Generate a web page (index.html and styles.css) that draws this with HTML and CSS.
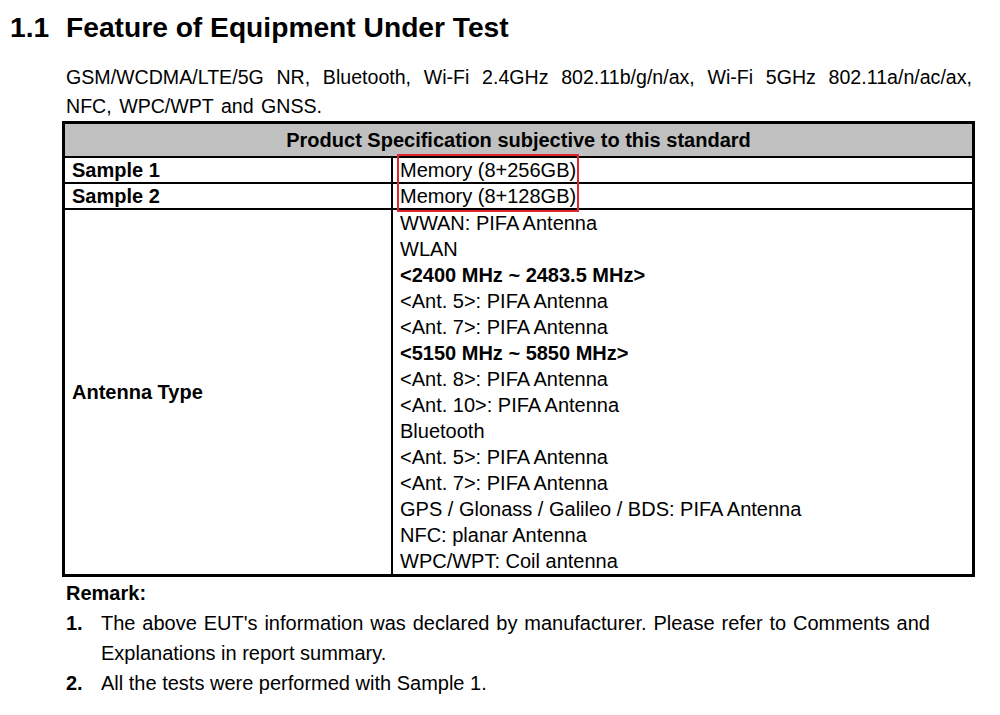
FILE: index.html
```html
<!DOCTYPE html>
<html>
<head>
<meta charset="utf-8">
<link rel="stylesheet" href="styles.css">
</head>
<body>
<div class="page">
  <h1 class="title"><span class="num">1.1</span><span>Feature of Equipment Under Test</span></h1>
  <div class="content">
    <p class="intro">GSM/WCDMA/LTE/5G NR, Bluetooth, Wi-Fi 2.4GHz 802.11b/g/n/ax, Wi-Fi 5GHz 802.11a/n/ac/ax, NFC, WPC/WPT and GNSS.</p>
  </div>
  <div class="table-wrap">
    <table class="spec">
      <tr class="head"><th colspan="2">Product Specification subjective to this standard</th></tr>
      <tr class="sample"><td class="label">Sample 1</td><td class="val">Memory (8+256GB)</td></tr>
      <tr class="sample"><td class="label">Sample 2</td><td class="val">Memory (8+128GB)</td></tr>
      <tr class="ant">
        <td class="label">Antenna Type</td>
        <td class="val">
          <div>WWAN: PIFA Antenna</div>
          <div>WLAN</div>
          <div class="b">&lt;2400 MHz ~ 2483.5 MHz&gt;</div>
          <div>&lt;Ant. 5&gt;: PIFA Antenna</div>
          <div>&lt;Ant. 7&gt;: PIFA Antenna</div>
          <div class="b">&lt;5150 MHz ~ 5850 MHz&gt;</div>
          <div>&lt;Ant. 8&gt;: PIFA Antenna</div>
          <div>&lt;Ant. 10&gt;: PIFA Antenna</div>
          <div>Bluetooth</div>
          <div>&lt;Ant. 5&gt;: PIFA Antenna</div>
          <div>&lt;Ant. 7&gt;: PIFA Antenna</div>
          <div>GPS / Glonass / Galileo / BDS: PIFA Antenna</div>
          <div>NFC: planar Antenna</div>
          <div>WPC/WPT: Coil antenna</div>
        </td>
      </tr>
    </table>
    <div class="highlight"></div>
  </div>
  <div class="remark">
    <div class="remark-title">Remark:</div>
    <ol class="notes">
      <li><span class="n">1.</span><span class="t">The above EUT's information was declared by manufacturer. Please refer to Comments and Explanations in report summary.</span></li>
      <li><span class="n">2.</span><span class="t">All the tests were performed with Sample 1.</span></li>
    </ol>
  </div>
</div>
</body>
</html>
```

FILE: styles.css
```css
html, body {
  margin: 0;
  padding: 0;
  background: #ffffff;
}
body {
  font-family: "Liberation Sans", Arial, sans-serif;
  color: #000;
}
.page {
  width: 1000px;
  height: 715px;
  overflow: hidden;
}
.title {
  margin: 10px 0 0 10px;
  font-size: 28.2px;
  line-height: 34px;
  font-weight: bold;
  display: flex;
}
.title .num {
  width: 56px;
}
.content {
  margin: 19px 0 0 66px;
  width: 906px;
}
.intro {
  margin: 0;
  font-size: 19.6px;
  line-height: 29px;
  word-spacing: 2px;
  text-align: justify;
}
.table-wrap {
  position: relative;
  margin-left: 62px;
  width: 913px;
}
.spec {
  width: 913px;
  border-collapse: collapse;
  border: 3px solid #000;
  font-size: 20px;
}
.spec th, .spec td {
  border: 2px solid #000;
  padding: 0;
}
.spec .head th {
  background: #c0c0c0;
  font-weight: bold;
  height: 32px;
  line-height: 32px;
  text-align: center;
  border-top: 3px solid #000;
}
.spec .label {
  width: 319px;
  padding-left: 7px;
  font-weight: bold;
  text-align: left;
}
.spec .val {
  padding-left: 7px;
  text-align: left;
}
.spec .sample td {
  height: 24px;
  line-height: 24px;
}
.spec .ant td {
  line-height: 26px;
  vertical-align: middle;
}
.spec .ant .val {
  vertical-align: top;
}
.b {
  font-weight: bold;
}
.highlight {
  position: absolute;
  left: 335px;
  top: 33px;
  width: 178px;
  height: 54px;
  border: 2px solid #e3262d;
}
.remark {
  margin: 1px 0 0 66px;
  width: 864px;
  font-size: 20px;
  line-height: 30px;
}
.remark-title {
  font-weight: bold;
}
.notes {
  list-style: none;
  margin: 0;
  padding: 0;
}
.notes li {
  display: flex;
}
.notes .n {
  width: 35px;
  flex: none;
  font-weight: bold;
}
.notes .t {
  flex: 1;
  text-align: justify;
}
```
